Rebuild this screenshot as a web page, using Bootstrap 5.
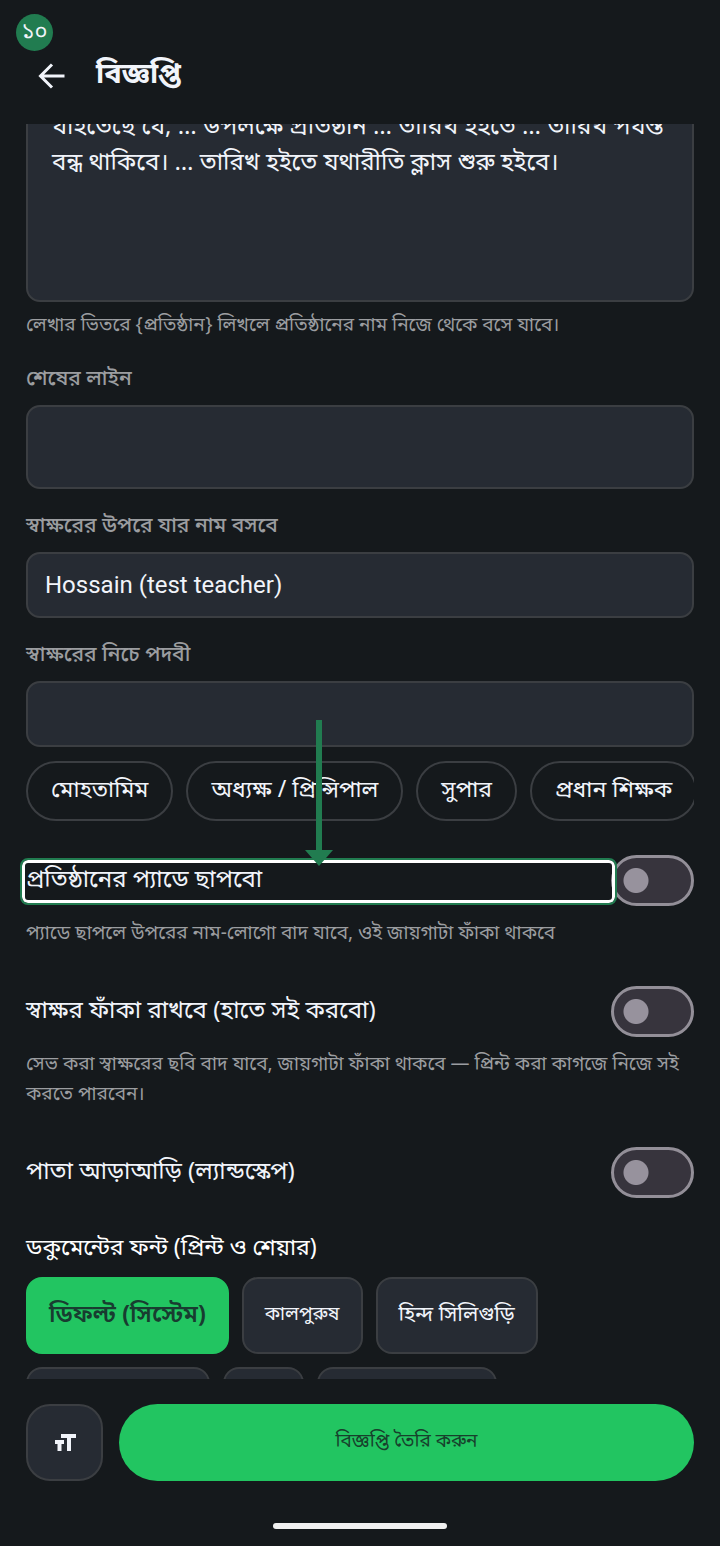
<!DOCTYPE html>
<html lang="bn" data-bs-theme="dark">
<head>
<meta charset="utf-8">
<meta name="viewport" content="width=device-width, initial-scale=1">
<title>বিজ্ঞপ্তি</title>
<link href="https://cdn.jsdelivr.net/npm/bootstrap@5.3.0/dist/css/bootstrap.min.css" rel="stylesheet">
<style>
  :root { --page: #15191c; --panel: #262b33; --line: #3b3e42; --ink: #f1f4fa; --dim: #9b9da0; --go: #22c561; --guide: #217c50; }
  body { background: var(--page); color: var(--ink); font-family: "Noto Sans Bengali", "Noto Sans", sans-serif; font-size: 24px; line-height: 32px; }
  .topbar { height: 124px; padding: 48px 32px 0; }
  .topbar h1 { font-size: 29px; line-height: 56px; color: var(--ink); }
  .back { width: 40px; height: 56px; }
  .step-no { left: 16px; top: 14px; width: 37px; height: 37px; background: var(--guide); font-size: 22px; line-height: 40px; }
  .scroller { min-height: 0; padding: 0 26px; }
  .field, .field:focus { background: var(--panel); border: 2px solid var(--line); border-radius: 14px; color: var(--ink); font-size: 24px; padding: 0 17px; height: 66px; box-shadow: none; resize: none; }
  .field.latin { font-family: Roboto, "Noto Sans Bengali", sans-serif; }
  .field.message { height: 198px; margin-top: -20px; padding: 4px 24px; line-height: 36px; overflow: hidden; }
  .field.tall { height: 84px; }
  .caption { color: var(--dim); font-size: 21px; line-height: 28px; font-weight: 500; margin: 24px 0 11px; }
  .hint { color: var(--dim); font-size: 19px; line-height: 30px; margin: 14px 0 36px; }
  .hint.first { margin: 10px 0 24px; }
  .chips { gap: 13px; margin: 14px 0 34px; }
  .chip { height: 60px; border: 2px solid var(--line); border-radius: 30px; padding: 0 23px 1px; background: none; color: var(--ink); font-size: 23px; line-height: 32px; }
  .option { height: 51px; }
  .option label { line-height: 53px; }
  .form-check-input.toggle { width: 83px; height: 51px; margin: 0; border: 3px solid #938f98; border-radius: 26px; background: #37343d radial-gradient(circle at 22px 50%, #97929d 12px, transparent 13px) no-repeat; box-shadow: none; }
  .spot { inset: 3px -6px 1px; border: 2px solid var(--guide); border-radius: 8px; box-shadow: inset 0 0 0 3px #fff; pointer-events: none; }
  .spot svg { left: 50%; bottom: 37px; transform: translateX(-50%); }
  .section-title { font-size: 23px; line-height: 32px; margin: 35px 0 12px; }
  .fonts { gap: 13px; margin-bottom: 13px; }
  .font-btn { height: 77px; border: 2px solid var(--line); border-radius: 16px; padding: 0 21px; background: var(--panel); color: var(--ink); font-size: 21px; }
  .font-btn.chosen { background: var(--go); border-color: var(--go); color: #183c30; font-size: 24px; font-weight: 600; }
  .font-btn.compact { font-size: 19px; }
  .w-a { width: 184px; } .w-b { width: 81px; } .w-c { width: 180px; }
  .bottombar { height: 167px; padding: 25px 26px 0; }
  .size-btn { width: 77px; height: 77px; border: 2px solid var(--line); border-radius: 24px; background: var(--panel); }
  .submit { height: 77px; border: 0; border-radius: 39px; background: var(--go); color: #17402c; font-size: 19px; padding: 0; }
  .home-bar { width: 174px; height: 6px; background: #f1f1f1; margin-top: 42px; }
</style>
</head>
<body>
<div class="vh-100 d-flex flex-column overflow-hidden position-relative">
  <span class="step-no position-absolute rounded-circle text-center">১০</span>
  <header class="topbar d-flex flex-shrink-0 align-items-start">
    <button class="back btn p-0 border-0 d-flex align-items-center justify-content-center" aria-label="Back">
      <svg width="28" height="28" viewBox="0 0 28 28" fill="none" stroke="#f1f4fa" stroke-width="3"><path d="M26.500 14H3M14 2.500 2.500 14 14 25.500"/></svg>
    </button>
    <h1 class="mb-0 ms-4 fw-bold">বিজ্ঞপ্তি</h1>
  </header>

  <main class="scroller flex-grow-1 overflow-hidden">
    <textarea class="field message form-control" aria-label="বিজ্ঞপ্তি">যাইতেছে যে, … উপলক্ষে প্রতিষ্ঠান … তারিখ হইতে … তারিখ পর্যন্ত
বন্ধ থাকিবে। … তারিখ হইতে যথারীতি ক্লাস শুরু হইবে।</textarea>
    <p class="hint first">লেখার ভিতরে {প্রতিষ্ঠান} লিখলে প্রতিষ্ঠানের নাম নিজে থেকে বসে যাবে।</p>

    <label class="caption d-block" for="closing">শেষের লাইন</label>
    <textarea class="field tall form-control" id="closing"></textarea>
    <label class="caption d-block" for="signer">স্বাক্ষরের উপরে যার নাম বসবে</label>
    <input class="field latin form-control" id="signer" value="Hossain (test teacher)">
    <label class="caption d-block" for="post">স্বাক্ষরের নিচে পদবী</label>
    <input class="field form-control" id="post">

    <div class="chips d-flex overflow-hidden">
      <button class="chip flex-shrink-0">মোহতামিম</button>
      <button class="chip flex-shrink-0">অধ্যক্ষ / প্রিন্সিপাল</button>
      <button class="chip flex-shrink-0">সুপার</button>
      <button class="chip flex-shrink-0">প্রধান শিক্ষক</button>
    </div>

    <div class="option d-flex">
      <div class="flex-grow-1 position-relative z-1">
        <label for="pad">প্রতিষ্ঠানের প্যাডে ছাপবো</label>
        <div class="spot position-absolute">
          <svg class="position-absolute" width="28" height="146" viewBox="0 0 28 146" fill="#217c50"><path d="M11 0h6v130h11L14 146 0 130h11z"/></svg>
        </div>
      </div>
      <input class="toggle form-check-input flex-shrink-0" type="checkbox" role="switch" id="pad">
    </div>
    <p class="hint">প্যাডে ছাপলে উপরের নাম-লোগো বাদ যাবে, ওই জায়গাটা ফাঁকা থাকবে</p>

    <div class="option d-flex">
      <label class="flex-grow-1" for="blank">স্বাক্ষর ফাঁকা রাখবে (হাতে সই করবো)</label>
      <input class="toggle form-check-input flex-shrink-0" type="checkbox" role="switch" id="blank">
    </div>
    <p class="hint">সেভ করা স্বাক্ষরের ছবি বাদ যাবে, জায়গাটা ফাঁকা থাকবে — প্রিন্ট করা কাগজে নিজে সই করতে পারবেন।</p>

    <div class="option d-flex">
      <label class="flex-grow-1" for="landscape">পাতা আড়াআড়ি (ল্যান্ডস্কেপ)</label>
      <input class="toggle form-check-input flex-shrink-0" type="checkbox" role="switch" id="landscape">
    </div>

    <h2 class="section-title fw-normal">ডকুমেন্টের ফন্ট (প্রিন্ট ও শেয়ার)</h2>
    <div class="fonts d-flex">
      <button class="font-btn chosen">ডিফল্ট (সিস্টেম)</button>
      <button class="font-btn compact">কালপুরুষ</button>
      <button class="font-btn">হিন্দ সিলিগুড়ি</button>
    </div>
    <div class="fonts d-flex">
      <button class="font-btn w-a"></button>
      <button class="font-btn w-b"></button>
      <button class="font-btn w-c"></button>
    </div>
  </main>

  <footer class="bottombar flex-shrink-0">
    <div class="d-flex gap-3">
      <button class="size-btn flex-shrink-0 d-flex align-items-center justify-content-center p-0" aria-label="Text size">
        <svg width="22" height="18" viewBox="0 0 22 18" fill="#f1f4fa"><path d="M7 0h15v4h-5v13h-4V4H7zM1 6h9v4H7.500v7h-4v-7H1z"/></svg>
      </button>
      <button class="submit flex-grow-1">বিজ্ঞপ্তি তৈরি করুন</button>
    </div>
    <div class="home-bar rounded-pill mx-auto"></div>
  </footer>
</div>
<script src="https://cdn.jsdelivr.net/npm/bootstrap@5.3.0/dist/js/bootstrap.bundle.min.js"></script>
</body>
</html>
